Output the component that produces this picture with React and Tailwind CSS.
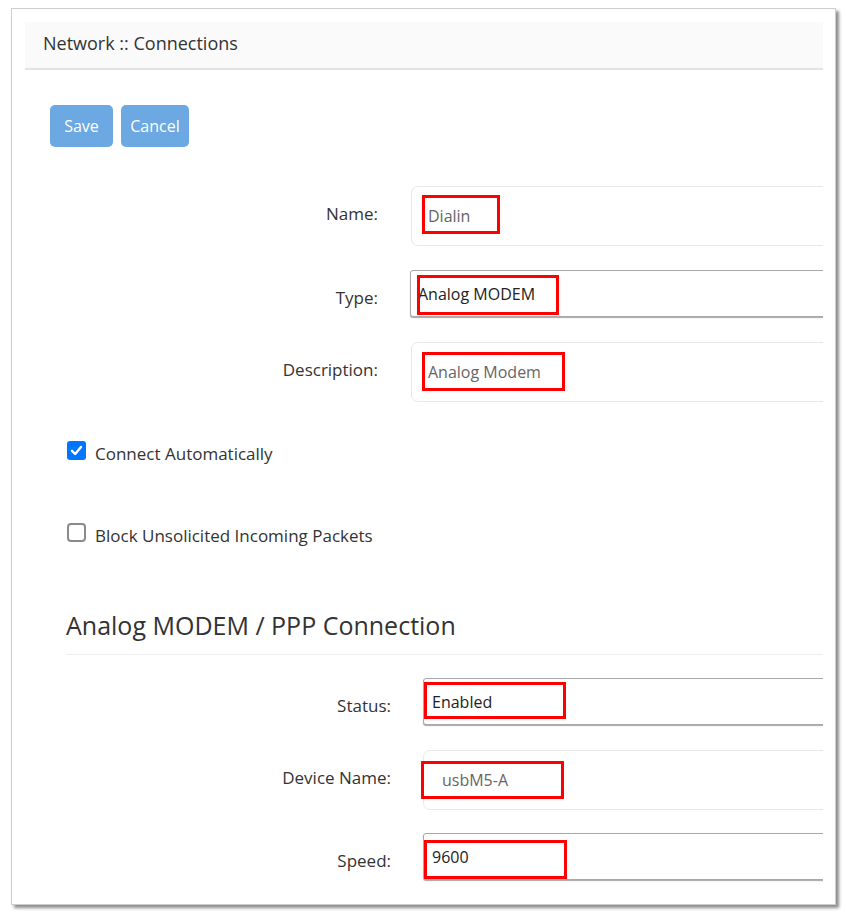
import React from 'react';

// Red annotation boxes drawn over the field values (offsets are relative to the field)
function Field({ kind, value, textLeft, box }) {
  const isSelect = kind === 'select';
  return (
    <div
      className={
        isSelect
          ? 'relative flex-1 -mr-4 h-[47px] flex items-center border border-[#a9a9a9] rounded-[3px] shadow-[0_1px_1px_rgba(0,0,0,0.35)] bg-white text-[16px] text-[#222]'
          : 'relative flex-1 -mr-4 h-[60px] flex items-center border border-[#e8e8e8] rounded-[7px] bg-white text-[16px] text-[#666]'
      }
    >
      <span style={{ marginLeft: textLeft }}>{value}</span>
      <div
        className="absolute border-[3px] border-[#ff0000]"
        style={{ left: box[0], top: box[1], width: box[2], height: box[3] }}
      />
    </div>
  );
}

function Row({ label, labelW, gap, className, ...field }) {
  const isSelect = field.kind === 'select';
  return (
    <div className={'flex items-center ' + className}>
      <div
        className={'shrink-0 text-right text-[17px] text-[#333] ' + (isSelect ? 'pt-[9px]' : 'pb-[4px]')}
        style={{ width: labelW, marginRight: gap }}
      >
        {label}
      </div>
      <Field {...field} />
    </div>
  );
}

function Check({ checked, label, className }) {
  return (
    <div className={'flex items-start ml-[42px] ' + className}>
      {checked ? (
        <div className="w-[19px] h-[19px] rounded-[3px] bg-[#0075ff] flex items-center justify-center">
          <svg width="13" height="13" viewBox="0 0 13 13">
            <path d="M2 6.8 L5.2 10 L11 3" fill="none" stroke="white" strokeWidth="2.4" strokeLinecap="round" strokeLinejoin="round" />
          </svg>
        </div>
      ) : (
        <div className="w-[19px] h-[19px] rounded-[4px] border-2 border-[#8a8a8a] bg-white" />
      )}
      <span className="ml-[9px] text-[17px] text-[#333]">{label}</span>
    </div>
  );
}

export default function App() {
  return (
    <div
      className="w-[847px] h-[921px] bg-white pt-[8px] pl-[11px]"
      style={{ fontFamily: '"Open Sans", "Noto Sans", sans-serif' }}
    >
      <div className="w-[825px] h-[897px] border border-[#cdcdcd] bg-white shadow-[3px_3px_3px_rgba(0,0,0,0.45)] pt-[13px] pl-[13px] pr-[12px]">
        <div className="h-full overflow-hidden">
          {/* page title bar */}
          <div className="h-[48px] bg-[#fafafa] border-b-2 border-[#e2e2e2] flex items-center pl-[18px] pb-[4px] text-[18px] text-[#333]">
            Network :: Connections
          </div>

          <div className="flex gap-[8px] ml-[25px] mt-[35px]">
            <button className="w-[63px] h-[42px] rounded-[5px] bg-[#6ca8e1] text-white text-[16px]">Save</button>
            <button className="w-[68px] h-[42px] rounded-[5px] bg-[#6ca8e1] text-white text-[16px]">Cancel</button>
          </div>

          <div className="ml-[1px]">
            <Row className="mt-[39px]" label="Name:" labelW={352} gap={33} kind="input" value="Dialin" textLeft={16} box={[10, 8, 78, 39]} />
            <Row className="mt-[24px]" label="Type:" labelW={352} gap={32} kind="select" value="Analog MODEM" textLeft={7} box={[6, 4, 142, 40]} />
            <Row className="mt-[25px]" label="Description:" labelW={352} gap={33} kind="input" value="Analog Modem" textLeft={16} box={[10, 9, 143, 39]} />
          </div>

          <Check className="mt-[39px]" checked label="Connect Automatically" />
          <Check className="mt-[56px]" label="Block Unsolicited Incoming Packets" />

          <div className="ml-[41px] mt-[61px]">
            <div className="text-[25px] leading-[32px] text-[#333] pb-[13px] border-b border-[#eeeeee]">
              Analog MODEM / PPP Connection
            </div>
            <Row className="mt-[23px]" label="Status:" labelW={325} gap={32} kind="select" value="Enabled" textLeft={8} box={[0, 3, 142, 37]} />
            <Row className="mt-[25px]" label="Device Name:" labelW={325} gap={32} kind="input" value="usbM5-A" textLeft={18} box={[-3, 10, 143, 38]} />
            <Row className="mt-[23px]" label="Speed:" labelW={325} gap={32} kind="select" value="9600" textLeft={8} box={[0, 6, 143, 39]} />
          </div>
        </div>
      </div>
    </div>
  );
}
